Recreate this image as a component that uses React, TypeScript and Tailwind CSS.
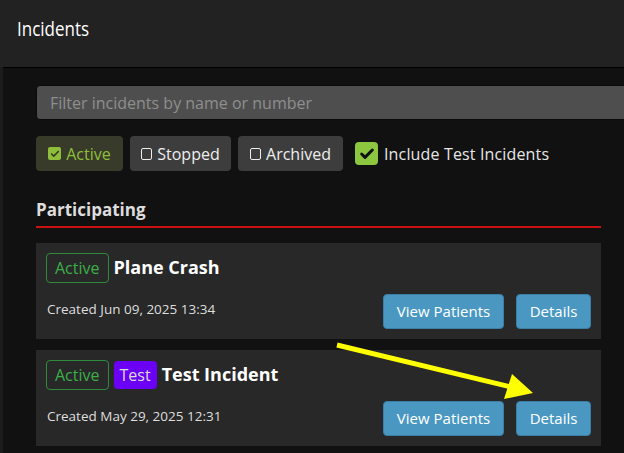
import { Check } from 'lucide-react';

function Badge({ children, variant }: { children: React.ReactNode; variant: 'active' | 'test' }) {
  if (variant === 'test') {
    return (
      <span className="h-[28px] px-[6px] flex items-center rounded-[4px] bg-[#6a00f4] text-[#dcdcdc] text-[16px]">
        {children}
      </span>
    );
  }
  return (
    <span className="h-[30px] px-[8px] flex items-center rounded-[4px] border border-[#2e8b3e] text-[#3cae4a] text-[16px]">
      {children}
    </span>
  );
}

function IncidentCard({ title, created, test }: { title: string; created: string; test?: boolean }) {
  return (
    <div className="bg-[#282828] px-[10px] pt-[10px] pb-[10px]">
      <div className="flex items-center gap-[5px]">
        <Badge variant="active">Active</Badge>
        {test && <Badge variant="test">Test</Badge>}
        <span className="text-white font-bold text-[18px]">{title}</span>
      </div>
      <div className="flex items-end justify-between mt-[11px]">
        <span className="text-[13.5px] text-[#dedede] pb-[9px] pl-[1px]">{created}</span>
        <div className="flex gap-[12px]">
          <button className="h-[35px] w-[121px] rounded-[4px] bg-[#4a98c2] border border-[#3a7fa6] text-white text-[15px]">
            View Patients
          </button>
          <button className="h-[35px] w-[75px] rounded-[4px] bg-[#4a98c2] border border-[#3a7fa6] text-white text-[15px]">
            Details
          </button>
        </div>
      </div>
    </div>
  );
}

export default function App() {
  return (
    <div className="relative w-[624px] h-[453px] overflow-hidden bg-[#222222] font-['Open_Sans',sans-serif]">
      {/* Page header */}
      <div className="h-[67px] pl-[17px] pt-[14px]">
        <h1 className="inline-block origin-left scale-x-[0.85] text-[20px] text-white">Incidents</h1>
      </div>

      {/* Main panel */}
      <div className="flex h-[386px]">
        <div className="w-[3px] bg-[#1c1c1c]" />
        <div className="flex-1 bg-[#111111] border-t border-black pl-[33px] pt-[17px]">
          <div className="h-[35px] -mr-[20px] rounded-[4px] border border-[#0a0a0a] bg-[#4e4e4e] flex items-center pl-[13px]">
            <span className="text-[16px] text-[#8e8e8e]">Filter incidents by name or number</span>
          </div>

          <div className="flex items-center gap-[7px] mt-[16px]">
            <button className="h-[35px] w-[87px] rounded-[4px] bg-[#383b2a] text-[#8fbf3a] text-[16px] flex items-center justify-center gap-[5px]">
              <span className="w-[13px] h-[13px] rounded-[2px] bg-[#8fbf3a] flex items-center justify-center">
                <Check className="w-[10px] h-[10px] text-[#383b2a]" strokeWidth={4} />
              </span>
              Active
            </button>
            <button className="h-[35px] w-[101px] rounded-[4px] bg-[#3d3d3d] text-[#eeeeee] text-[16px] flex items-center justify-center gap-[5px]">
              <span className="w-[11px] h-[12px] rounded-[2px] border border-[#eeeeee]" />
              Stopped
            </button>
            <button className="h-[35px] w-[105px] rounded-[4px] bg-[#3d3d3d] text-[#eeeeee] text-[16px] flex items-center justify-center gap-[5px]">
              <span className="w-[11px] h-[12px] rounded-[2px] border border-[#eeeeee]" />
              Archived
            </button>
            <div className="flex items-center gap-[6px] ml-[5px]">
              <span className="w-[23px] h-[23px] rounded-[4px] bg-[#8dc63f] flex items-center justify-center">
                <Check className="w-[16px] h-[16px] text-[#111111]" strokeWidth={4.5} />
              </span>
              <span className="text-[16px] text-[#e6e6e6] tracking-[0.15px]">Include Test Incidents</span>
            </div>
          </div>

          <div className="w-[565px] mt-[26px]">
            <h2 className="text-[17px] font-bold text-[#dddddd] pb-[3px] border-b-2 border-[#cc1111]">Participating</h2>
            <div className="flex flex-col gap-[11px] mt-[15px]">
              <IncidentCard title="Plane Crash" created="Created Jun 09, 2025 13:34" />
              <IncidentCard title="Test Incident" created="Created May 29, 2025 12:31" test />
            </div>
          </div>
        </div>
      </div>

      {/* Annotation arrow */}
      <svg className="absolute left-0 top-0 pointer-events-none" width="624" height="453">
        <line x1="337" y1="345" x2="515" y2="388" stroke="#ffff00" strokeWidth="5" />
        <polygon points="512,374 504,399 533,393" fill="#ffff00" />
      </svg>
    </div>
  );
}
